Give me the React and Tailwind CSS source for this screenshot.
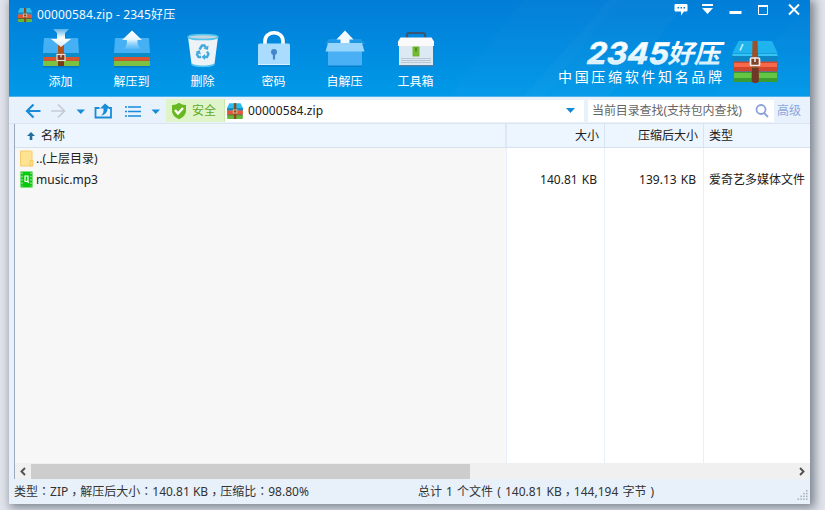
import React from "react";

function MiniArchive({ className }) {
  return (
    <svg viewBox="0 0 16 16" className={className}>
      <path d="M3 1h10l2 4v3H1V5z" fill="#29bdf0" />
      <rect x="1" y="5.500" width="14" height="2" fill="#1c86b8" />
      <rect x="1" y="7.500" width="14" height="3.700" fill="#e2573a" />
      <rect x="1" y="11.500" width="14" height="3.500" rx=".6" fill="#62b83a" />
      <rect x="1" y="11" width="14" height=".8" fill="#6d4b25" />
      <rect x="7" y="1" width="2.200" height="14" fill="#8d4a1c" />
      <rect x="6.500" y="7" width="3.200" height="2.800" fill="none" stroke="#d8c3a0" strokeWidth=".8" />
    </svg>
  );
}

function Defs() {
  return (
    <defs>
      <linearGradient id="arrowDown" x1="0" y1="0" x2="0" y2="1">
        <stop offset="0" stopColor="#fff" stopOpacity=".35" />
        <stop offset=".5" stopColor="#fff" />
        <stop offset="1" stopColor="#d5edfd" />
      </linearGradient>
      <linearGradient id="arrowUp" x1="0" y1="0" x2="0" y2="1">
        <stop offset="0" stopColor="#fff" />
        <stop offset=".5" stopColor="#e3f4ff" />
        <stop offset="1" stopColor="#9ad5fb" stopOpacity=".2" />
      </linearGradient>
    </defs>
  );
}

function Books() {
  return (
    <>
      <rect x="4" y="37" width="36" height="1.600" fill="#0565aa" opacity=".55" />
      <path d="M5 9h34l1 15H4z" fill="#45b0f3" />
      <rect x="4" y="24" width="36" height="4" fill="#0a8cc9" />
      <rect x="4" y="28" width="36" height="4" fill="#d9542f" />
      <rect x="4" y="31.500" width="36" height="1" fill="#9c6a30" />
      <rect x="4" y="32" width="36" height="5" fill="#7dc142" />
    </>
  );
}

function AddIcon() {
  return (
    <svg viewBox="0 0 44 42" className="h-[42px] w-11">
      <Defs />
      <Books />
      <rect x="19" y="16" width="6" height="21" fill="#b0541b" />
      <rect x="19" y="32" width="6" height="5" fill="#793b1c" />
      <path d="M14 0h16l-4 4v6h6l-10 8-10-8h6V4z" fill="url(#arrowDown)" />
      <rect x="18" y="25.500" width="8" height="6" fill="#84351c" stroke="#e9e0d5" strokeWidth="1.200" />
      <path d="M22 25.500v3" stroke="#e9e0d5" strokeWidth="1.200" />
    </svg>
  );
}

function ExtractIcon() {
  return (
    <svg viewBox="0 0 44 42" className="h-[42px] w-11">
      <Books />
      <path d="M22 1.500 32 11h-4.500c-.5 4 1 7 3.500 9H14c2.500-3 3.500-6 2.800-9H12z" fill="url(#arrowUp)" />
    </svg>
  );
}

function TrashIcon() {
  return (
    <svg viewBox="0 0 44 42" className="h-[42px] w-11">
      <path d="M7 8h30l-3.500 27c-.4 3.500-22.600 3.500-23 0z" fill="#edf2f6" />
      <path d="M10.300 33.500c.6 4 22.800 4 23.400 0l-.3 2c-.5 3.500-22.300 3.500-22.800 0z" fill="#56c5ef" />
      <ellipse cx="22" cy="8" rx="15" ry="2.600" fill="#c6d4dd" stroke="#4ec4ee" strokeWidth="1.500" />
      <g fill="none" stroke="#43aadf" strokeWidth="2.400">
        <path d="m18.500 20.500 2.500-4h2.500l1.500 2.500" />
        <path d="m26 22.500 1.500 2.500-1.500 3h-3" />
        <path d="m17.500 23-1.500 2.500 1.500 2.500h2.500" />
      </g>
      <path d="m27.500 16.500-.5 4.500-4.500-1.500zM24 25v6l-3.500-3zM14.500 23l4-2 1.500 4.500z" fill="#43aadf" />
    </svg>
  );
}

function LockIcon() {
  return (
    <svg viewBox="0 0 44 42" className="h-[42px] w-11">
      <path d="M13 16v-4c0-11 18-11 18 0v4" fill="none" stroke="#fff" strokeWidth="3.600" />
      <rect x="6" y="35.500" width="32" height="2" fill="#0874c2" opacity=".5" />
      <rect x="6" y="14.500" width="32" height="21.500" rx="1.500" fill="#a9dcff" />
      <path d="M6 35h32v1H6z" fill="#d9f0ff" />
      <circle cx="22" cy="23" r="3" fill="#4385ca" />
      <path d="M20.900 24h2.200v6.500h-2.200z" fill="#4385ca" />
    </svg>
  );
}

function SfxIcon() {
  return (
    <svg viewBox="0 0 44 42" className="h-[42px] w-11">
      <path d="m2 15 4-5h32l4 5z" fill="#45aaf0" opacity=".45" />
      <rect x="5" y="36" width="34" height="2" fill="#0675c3" opacity=".6" />
      <rect x="5" y="22" width="34" height="14.500" fill="#49b0f5" />
      <path d="M5 14h34l2.500 8.500h-39z" fill="#97d5fd" />
      <path d="m22 1.500 8.500 9h-4V14h-9v-3.500h-4z" fill="#f3faff" />
    </svg>
  );
}

function ToolboxIcon() {
  return (
    <svg viewBox="0 0 44 42" className="h-[42px] w-11">
      <path d="M13 10V6q0-2 2-2h14q2 0 2 2v4" fill="none" stroke="#385774" strokeWidth="2.200" />
      <rect x="5" y="16" width="34" height="20" fill="#dce8f2" />
      <path d="m6.500 8.500-2.500 4V17h36v-4.500l-2.500-4z" fill="#fafafa" />
      <path d="M5 36h34v1.500H5z" fill="#517fa2" />
      <path d="M7 29.500h30M7 31.500h30M7 33.500h30" stroke="#aab8c3" strokeWidth=".7" />
      <rect x="18.500" y="17.500" width="7" height="10" rx=".7" fill="#73b832" />
      <path d="M22 18.500v4" stroke="#39731d" strokeWidth="1.200" />
    </svg>
  );
}

function BrandArchive() {
  return (
    <svg viewBox="0 0 48 46" className="h-[46px] w-12">
      <path d="M8 1h32q1 0 1.500 1L47 14H1L7 2q.3-1 1-1z" fill="#20b4ee" />
      <path d="M1 13.500h46V18q0 3-2 3H3q-2 0-2-3z" fill="#0e86c4" />
      <path d="M1.500 14h45v2h-45z" fill="#35c4f4" />
      <rect x="2" y="21.500" width="45" height="10" rx="1.500" fill="#cf462c" />
      <path d="M3 23h43v4H3z" fill="#f8694b" />
      <rect x="2" y="32" width="45" height="10" rx="1.500" fill="#399e2f" />
      <path d="M3 33h43v5H3z" fill="#65c544" />
      <path d="M21.500 1h5l1.500 40q-4 4.500-7.500 0z" fill="#99522a" />
      <path d="M21 28h6.500l.3 13.500q-3.500 3-7 0z" fill="#6e3826" />
      <rect x="19.500" y="18" width="9" height="7.500" rx="1" fill="#80412a" stroke="#f3eee7" strokeWidth="1.700" />
      <path d="M24 17.500v4.500" stroke="#eee6dc" strokeWidth="1.600" />
      <path d="m12 4-3 6.500" stroke="#bdefff" strokeWidth="1.700" />
    </svg>
  );
}

const tools = [
  { label: "添加", Icon: AddIcon },
  { label: "解压到", Icon: ExtractIcon },
  { label: "删除", Icon: TrashIcon },
  { label: "密码", Icon: LockIcon },
  { label: "自解压", Icon: SfxIcon },
  { label: "工具箱", Icon: ToolboxIcon },
];

function Header() {
  return (
    <header className="relative h-[97px] overflow-hidden border-b border-[#4db2ea] bg-linear-to-b from-[#027dd7] to-[#0199e8] text-white">
      <svg viewBox="0 0 801 96" className="pointer-events-none absolute inset-0 h-24 w-[801px]">
        <path d="M440 96 515 0h95l-75 96z" fill="#fff" opacity=".015" />
        <path d="M515 96 600 0h80l-80 96z" fill="#fff" opacity=".025" />
        <path d="M700 96 801 10v86z" fill="#fff" opacity=".015" />
      </svg>
      <div className="relative flex h-[29px] justify-between">
        <div className="flex h-[29px] items-center pl-2 text-[12px]">
          <MiniArchive className="size-4" />
          <span className="ml-[4px] tracking-[0.12px] text-[#f4faff]">00000584.zip - 2345好压</span>
        </div>
        <svg viewBox="0 0 130 20" className="mr-[7px] h-5 w-[130px]" fill="none">
          <path d="M2.500 4h11q1 0 1 1v5.500q0 1-1 1H11l-3 4v-4H2.500q-1 0-1-1V5q0-1 1-1z" fill="#fff" />
          <path d="M4.500 7H6v1.500H4.500zM7.500 7H9v1.500H7.500zM10.500 7H12v1.500h-1.500z" fill="#087cd0" />
          <path d="M29 5h11" stroke="#fff" strokeWidth="2" />
          <path d="M29 8h11l-5.500 6z" fill="#fff" />
          <path d="M56.500 12.500h12" stroke="#fff" strokeWidth="3" />
          <path d="M85.500 6h9v8.500h-9z" stroke="#fff" />
          <path d="M85 6h10" stroke="#fff" strokeWidth="2" />
          <path d="m116 4.500 10 10m0-10-10 10" stroke="#fff" strokeWidth="2" />
        </svg>
      </div>
      <div className="relative flex justify-between">
        <div className="flex pl-[16px]">
          {tools.map(({ label, Icon }) => (
            <button key={label} className="flex w-[71px] flex-col items-center text-[12px] leading-[18px]">
              <Icon />
              <span className="mt-[2px]">{label}</span>
            </button>
          ))}
        </div>
        <div className="flex pr-[30px]">
          <svg viewBox="0 0 174 64" className="h-16 w-[174px]">
            <defs>
              <linearGradient id="brandText" x1="0" y1="0" x2="0" y2="1">
                <stop offset=".3" stopColor="#fff" />
                <stop offset="1" stopColor="#c9eafb" />
              </linearGradient>
            </defs>
            <g transform="translate(27 34.5) skewX(-14)" fill="url(#brandText)" fontFamily="Inter, 'Noto Sans CJK SC', sans-serif" fontWeight="700">
              <text x="0" y="0" fontSize="30" textLength="82" lengthAdjust="spacingAndGlyphs" stroke="#e9f8ff" strokeWidth=".6">2345</text>
              <text x="82" y="-1" fontSize="26" textLength="53" lengthAdjust="spacingAndGlyphs">好压</text>
            </g>
            <text x="0" y="53" fontSize="14" fill="#fff" fontFamily="'Noto Sans CJK SC', sans-serif" textLength="164">中国压缩软件知名品牌</text>
          </svg>
          <div className="ml-[-1px] mr-[1px] pt-[11px]"><BrandArchive /></div>
        </div>
      </div>
    </header>
  );
}

function AddressBar() {
  return (
    <nav className="flex h-[27px] items-center border-b border-[#dce5ef] bg-[#e8f2fc] pt-px">
      <svg viewBox="0 0 157 24" className="h-6 w-[157px] shrink-0" fill="none">
        <path d="M24.500 5.500 18 12l6.500 6.500M18.500 12h13" stroke="#198bd8" strokeWidth="2.200" />
        <path d="m49 5.500 6.500 6.500-6.500 6.500M42 12h13" stroke="#c5cbd5" strokeWidth="1.700" />
        <path d="M67.500 10.500H76l-4.200 4.500zM142.500 10.500h8.500l-4.200 4.500z" fill="#158bd9" />
        <path d="M90.500 9H86.500v9.500h15.500V9h-2" stroke="#198bd8" strokeWidth="1.800" />
        <path d="M96 4.500 102 9.500h-3.500c0 4-2.500 6.500-6.500 7 2.500-2 2.700-4 2.500-7h-3.500z" fill="#198bd8" />
        <path d="M116 8h2m1 0h13M116 12.500h2m1 0h13M116 17h2m1 0h13" stroke="#198bd8" strokeWidth="1.700" />
      </svg>
      <div className="flex h-[23px] w-[59px] shrink-0 items-center border-r border-[#cbe8ae] bg-[#dff5c9] pl-1 text-[12px] text-[#60a829]">
        <svg viewBox="0 0 18 18" className="h-[18px] w-[18px]">
          <path d="M9 .8q3.500 2.500 7 2.200v6q0 5-7 8.200Q2 14 2 9V3q3.500.3 7-2.200z" fill="#68b821" />
          <path d="m5 8 3 3.500L13 6" fill="none" stroke="#fff" strokeWidth="2.400" />
        </svg>
        <span className="ml-1">安全</span>
      </div>
      <div className="flex h-[22px] w-[359px] shrink-0 items-center bg-white pl-px text-[12px]">
        <MiniArchive className="h-[18px] w-[18px]" />
        <span className="ml-1 grow tracking-[0.08px]">00000584.zip</span>
        <svg viewBox="0 0 9 5" className="mr-[9px] h-[5px] w-[9px]"><path d="M0 0h9L4.500 5z" fill="#138bd8" /></svg>
      </div>
      <div className="ml-1 flex h-[22px] w-[186px] shrink-0 items-center bg-white pl-1 text-[12px] text-[#666]">
        <span className="w-[161px] shrink-0 whitespace-nowrap tracking-[-0.1px]">当前目录查找(支持包内查找)</span>
        <svg viewBox="0 0 16 16" className="ml-px h-4 w-4" fill="none" stroke="#8aa2d8" strokeWidth="1.800">
          <circle cx="7" cy="6.500" r="4.500" /><path d="m10 10 4 4" />
        </svg>
      </div>
      <span className="ml-[3px] whitespace-nowrap text-[12px] text-[#8da5dc]">高级</span>
    </nav>
  );
}

function FileTable() {
  return (
    <main className="ml-[5px] flex h-[355px] flex-col border-l border-[#9caabd] bg-white text-[12px] leading-4">
      <div className="flex h-[24px] shrink-0 border-b border-[#d5e1ee] bg-[#edf6ff]">
        <div className="flex w-[492px] shrink-0 items-center border-r-2 border-[#dae8f5] pl-3">
          <svg viewBox="0 0 8 8" className="size-2"><path d="M4 0 8 4H5.300v4H2.700V4H0z" fill="#226d9e" /></svg>
          <span className="ml-[6px]">名称</span>
        </div>
        <div className="flex w-[98px] shrink-0 items-center justify-end border-r border-[#d5e4f2] pr-[5px]">大小</div>
        <div className="flex w-[99px] shrink-0 items-center justify-end border-r border-[#d5e4f2] pr-[5px]">压缩后大小</div>
        <div className="flex items-center pl-[5px]">类型</div>
      </div>
      <div className="flex grow">
        <div className="w-[492px] shrink-0 border-r border-[#e7f0fa] bg-[#f7f7f7]">
          <div className="flex h-[21px] items-center pl-[5px]">
            <svg viewBox="0 0 14 17" className="h-[17px] w-[14px]">
              <path d="M.5 1h11l.5.500V16H.5z" fill="#ffe392" stroke="#f3cc6b" />
              <path d="M10 10.500h3V16h-3z" fill="#ffdd78" stroke="#edc364" strokeWidth=".7" />
            </svg>
            <span className="ml-[2px]">..(上层目录)</span>
          </div>
          <div className="flex h-[21px] items-center pl-[5px]">
            <svg viewBox="0 0 13 17" className="h-[17px] w-[13px]">
              <rect x=".5" y=".5" width="12" height="16" fill="#0bc80f" />
              <path d="M2 1.500v14M11 1.500v14" stroke="#d4f8cf" strokeDasharray="1.500 1.800" />
              <path d="M5 5h3v5.500H5zM7 9.500 8.700 12" fill="none" stroke="#fff" strokeWidth="1.200" />
            </svg>
            <span className="ml-[3px]">music.mp3</span>
          </div>
        </div>
        <div className="w-[98px] shrink-0 border-r border-[#e7f0fa] pr-[7px] pt-6 text-right [word-spacing:1px]">140.81 KB</div>
        <div className="w-[99px] shrink-0 border-r border-[#e7f0fa] pr-[7px] pt-6 text-right [word-spacing:1px]">139.13 KB</div>
        <div className="whitespace-nowrap pl-[5px] pt-6">爱奇艺多媒体文件</div>
      </div>
      <div className="flex h-[16px] shrink-0 items-center bg-[#f0f0f0]">
        <svg viewBox="0 0 16 15" className="h-[15px] w-4" fill="none" stroke="#505050" strokeWidth="1.900"><path d="m10 4-3.500 3.500L10 11" /></svg>
        <div className="h-[15px] w-[439px] bg-[#cdcdcd]" />
        <svg viewBox="0 0 16 15" className="ml-auto h-[15px] w-4" fill="none" stroke="#505050" strokeWidth="1.900"><path d="m6 4 3.500 3.500L6 11" /></svg>
      </div>
    </main>
  );
}

function Colon() {
  return <span className="font-['Noto_Sans_CJK_TC',sans-serif] leading-none">：</span>;
}

function Comma() {
  return <span className="align-[-3px] font-['Noto_Sans_CJK_TC',sans-serif] leading-none">，</span>;
}

function StatusBar() {
  return (
    <footer className="flex h-[25px] items-center bg-[#e8f1fa] pl-[5px] text-[12px] leading-4 text-[#333]">
      <span className="w-[404px] whitespace-nowrap">
        类型<Colon />ZIP<Comma />解压后大小<Colon />140.81 KB<Comma />压缩比<Colon />98.80%
      </span>
      <span className="whitespace-nowrap [word-spacing:1px]">总计 1 个文件 ( 140.81 KB<Comma />144,194 字节 )</span>
      <svg viewBox="0 0 11 11" className="ml-auto mr-[2px] mt-2 h-[11px] w-[11px]" fill="#a5adb5">
        {[0, 1, 2, 3].map((row) =>
          Array.from({ length: row + 1 }, (_, column) => (
            <rect key={`${row}-${column}`} x={9 - column * 2.8} y={row * 2.8} width="1.500" height="1.500" />
          ))
        )}
      </svg>
    </footer>
  );
}

export default function App() {
  return (
    <div className="h-[510px] w-[825px] overflow-hidden bg-[#e1e4eb] pl-[9px] font-['Noto_Sans','Noto_Sans_CJK_SC',sans-serif] text-[#202020]">
      <div className="h-[504px] w-[801px] overflow-hidden bg-[#e8f1fb] shadow-[3px_2px_9px_2px_rgba(50,60,75,0.55)]">
        <Header />
        <AddressBar />
        <FileTable />
        <StatusBar />
      </div>
    </div>
  );
}
